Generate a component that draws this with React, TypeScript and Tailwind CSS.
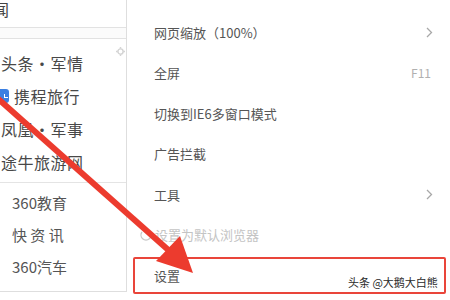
import React from "react";

const font = { fontFamily: '"Noto Sans CJK SC", "Noto Sans", sans-serif' };

function Chevron() {
  return (
    <svg width="7" height="11" viewBox="0 0 7 11" className="text-[#a8a8a8]">
      <path d="M1 1 L5.5 5.5 L1 10" fill="none" stroke="currentColor" strokeWidth="1.3" />
    </svg>
  );
}

export default function App() {
  const leftTop = ["头条・军情", "携程旅行", "凤凰・军事", "途牛旅游网"];
  const leftBottom = ["360教育", "快 资 讯", "360汽车"];
  return (
    <div className="relative w-[450px] h-[300px] overflow-hidden bg-white flex" style={font}>
      {/* left panel */}
      <div className="relative w-[127px] h-[292px] flex flex-col border-r border-b border-[#dedede] shrink-0">
        <div className="h-[28px] border-b border-[#e2e2e2] flex items-start">
          <span className="ml-[-23px] text-[16px] leading-[18px] text-[#444]">新闻</span>
        </div>
        <div className="h-[11px] border-b border-[#e2e2e2] bg-[#fbfbfb]" />
        <div className="flex flex-col pt-[7px] pb-[4px] border-b border-[#e4e4e4]">
          {leftTop.map((t, i) => (
            <div key={t} className="h-[33px] flex items-center text-[16px] text-[#484848] tracking-[0.5px]">
              {i === 1 ? (
                <>
                  <span className="w-[9px] h-[14px] bg-[#3b7fe2] rounded-r-[3px] mr-[5px] flex items-center justify-end pr-[1px]">
                    <span className="w-[4px] h-[4px] border-l-[1.5px] border-b-[1.5px] border-white" />
                  </span>
                  <span>{t}</span>
                </>
              ) : (
                <span className="ml-[1px]">{t}</span>
              )}
            </div>
          ))}
        </div>
        <div className="flex flex-col pt-[4px]">
          {leftBottom.map((t) => (
            <div key={t} className="h-[32px] flex items-center pl-[12px] text-[15px] text-[#555]">
              {t}
            </div>
          ))}
        </div>
        <svg className="absolute left-[116px] top-[47px]" width="9" height="9" viewBox="0 0 11 11">
          <circle cx="5.5" cy="5.5" r="3.2" fill="none" stroke="#d4d4d4" strokeWidth="1.8" />
          <g stroke="#d4d4d4" strokeWidth="1.8">
            <line x1="5.5" y1="0" x2="5.5" y2="2" />
            <line x1="5.5" y1="9" x2="5.5" y2="11" />
            <line x1="0" y1="5.5" x2="2" y2="5.5" />
            <line x1="9" y1="5.5" x2="11" y2="5.5" />
          </g>
        </svg>
      </div>

      {/* menu */}
      <div className="flex-1 flex flex-col pt-[12px] pl-[6px] pr-[4px] text-[13px] text-[#555]">
        <div className="h-[40.5px] flex items-center justify-between pl-[21px] pr-[13px]">
          <span>网页缩放（100%）</span>
          <Chevron />
        </div>
        <div className="h-[40.5px] flex items-center justify-between pl-[21px] pr-[15px]">
          <span>全屏</span>
          <span className="text-[#b0b0b0] text-[12px]">F11</span>
        </div>
        <div className="h-[40.5px] flex items-center pl-[21px]">
          <span>切换到IE6多窗口模式</span>
        </div>
        <div className="h-[40.5px] flex items-center pl-[21px]">
          <span>广告拦截</span>
        </div>
        <div className="h-[40.5px] flex items-center justify-between pl-[21px] pr-[13px]">
          <span>工具</span>
          <Chevron />
        </div>
        <div className="h-[40.5px] flex items-center pl-[7px] text-[#c4c4c4]">
          <svg width="12" height="12" viewBox="0 0 12 12" className="mr-[3px]">
            <path d="M2 3 A5 5 0 1 0 10 3" fill="none" stroke="#c8c8c8" strokeWidth="1.3" />
          </svg>
          <span>设置为默认浏览器</span>
        </div>
        <div className="mt-[2px] h-[37px] flex items-center pl-[19px] border-2 border-[#e9453a] rounded-[2px]">
          <span>设置</span>
        </div>
      </div>

      {/* watermark */}
      <div
        className="absolute left-[348px] top-[274px] text-[11px] text-[#2a2a2a] whitespace-nowrap"
        style={{ textShadow: "0 0 2px #fff, 0 0 2px #fff" }}
      >
        头条 @大鹅大白熊
      </div>

      {/* arrow */}
      <svg className="absolute left-0 top-0 pointer-events-none" width="450" height="300" viewBox="0 0 450 300">
        <line x1="-4" y1="97" x2="174" y2="255" stroke="#ec3b2e" strokeWidth="6" strokeLinecap="butt" />
        <polygon points="193,273 156,261 180,236" fill="#ec3b2e" />
      </svg>
    </div>
  );
}
